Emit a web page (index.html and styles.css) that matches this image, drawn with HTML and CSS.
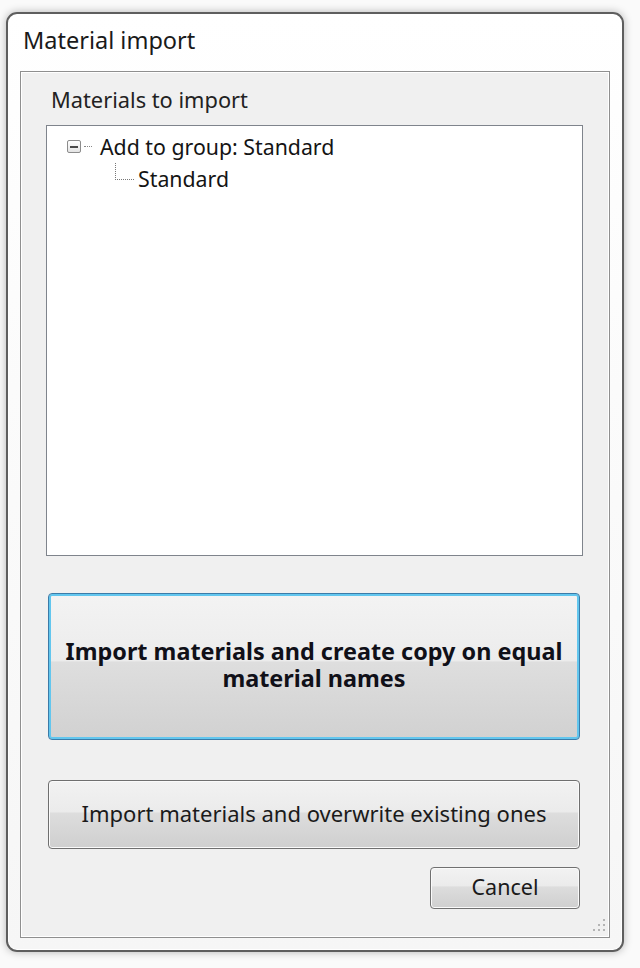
FILE: index.html
```html
<!DOCTYPE html>
<html>
<head>
<meta charset="utf-8">
<link rel="stylesheet" href="styles.css">
</head>
<body>
<div class="window">
  <div class="title">Material import</div>
  <div class="panel">
    <div class="label">Materials to import</div>
    <div class="tree">
      <div class="node root">
        <span class="expander"><span class="minus"></span></span>
        <span class="hdots"></span>
        <span class="text">Add to group: Standard</span>
      </div>
      <div class="node child">
        <span class="elbow"></span>
        <span class="text">Standard</span>
      </div>
    </div>
    <button class="btn primary"><span class="lines"><span class="line">Import materials and create copy on equal</span><span class="line">material names</span></span></button>
    <button class="btn secondary"><span>Import materials and overwrite existing ones</span></button>
    <div class="footer">
      <button class="btn cancel"><span>Cancel</span></button>
    </div>
    <div class="grip">
      <svg width="14" height="16" viewBox="0 0 14 16">
        <g fill="#b4b4b4">
          <rect x="11" y="1" width="2" height="2"/>
          <rect x="11" y="6" width="2" height="2"/>
          <rect x="6" y="6" width="2" height="2"/>
          <rect x="11" y="11" width="2" height="2"/>
          <rect x="6" y="11" width="2" height="2"/>
          <rect x="1" y="11" width="2" height="2"/>
        </g>
      </svg>
    </div>
  </div>
</div>
</body>
</html>
```
FILE: styles.css
```css
html, body {
  margin: 0;
  padding: 0;
}
body {
  width: 640px;
  height: 968px;
  background: #fafafa;
  font-family: "Noto Sans", "Open Sans", sans-serif;
  color: #1e1e1e;
  overflow: hidden;
}
.window {
  box-sizing: border-box;
  margin: 12px 0 0 6px;
  width: 618px;
  height: 940px;
  border: 2px solid #5e5e5e;
  border-radius: 11px;
  background: linear-gradient(180deg, #ffffff 0%, #fbfbfb 40%, #f6f6f6 100%);
  box-shadow: 0 0 9px rgba(0, 0, 0, 0.28), inset 0 0 0 1px #ffffff;
  padding: 0 12px 0 12px;
  display: flex;
  flex-direction: column;
}
.title {
  height: 57px;
  padding: 12px 0 0 3px;
  box-sizing: border-box;
  font-size: 23.5px;
  line-height: 28px;
  color: #1a1a1a;
}
.panel {
  position: relative;
  box-sizing: border-box;
  width: 590px;
  height: 867px;
  border: 1px solid #8f8f8f;
  box-shadow: inset 0 0 0 1px #ffffff;
  background: #f0f0f0;
  padding: 0 0 0 25px;
}
.label {
  font-size: 21.8px;
  line-height: 28px;
  padding: 14px 0 0 5px;
  height: 53px;
  box-sizing: border-box;
  color: #222;
}
.tree {
  box-sizing: border-box;
  width: 537px;
  height: 431px;
  background: #ffffff;
  border: 1px solid #7f848c;
  padding: 4px 0 0 20px;
  font-size: 21.3px;
  color: #141414;
}
.node {
  display: flex;
  align-items: center;
  height: 33px;
}
.expander {
  box-sizing: border-box;
  width: 14px;
  height: 13px;
  border: 1px solid #8c8c8c;
  border-radius: 2px;
  background: linear-gradient(180deg, #ffffff, #e4e4e4);
  display: flex;
  align-items: center;
  justify-content: center;
}
.minus {
  width: 8px;
  height: 2px;
  background: #4a4a4a;
}
.hdots {
  width: 8px;
  margin: 0 8px 0 3px;
  border-top: 1px dotted #888;
}
.root .text {
  line-height: 28px;
}
.child {
  height: 32px;
  padding-left: 48px;
  margin-top: -1px;
}
.elbow {
  width: 18px;
  height: 16px;
  border-left: 1px dotted #777;
  border-bottom: 1px dotted #777;
  margin: -14px 4px 0 0;
}
.btn {
  box-sizing: border-box;
  display: flex;
  align-items: center;
  justify-content: center;
  font-family: inherit;
  color: #1a1a1a;
  width: 532px;
  margin-left: 2px;
  border-radius: 4px;
  padding: 0;
  text-align: center;
  background: linear-gradient(180deg, #f3f3f3 0%, #ececec 46%, #dedede 47%, #d1d1d1 100%);
}
.primary {
  margin-top: 37px;
  height: 147px;
  border: 1px solid #3b7ba8;
  box-shadow: inset 0 0 0 2px #62c6ee;
  font-weight: bold;
  font-size: 23.4px;
  color: #101018;
}
.lines {
  display: flex;
  flex-direction: column;
  align-items: center;
  padding-bottom: 3px;
}
.line {
  display: block;
  height: 27px;
  line-height: 27px;
}
.secondary {
  margin-top: 40px;
  height: 69px;
  border: 1px solid #6f6f6f;
  box-shadow: inset 0 0 0 1px #fafafa;
  font-size: 22px;
  line-height: 28px;
  background: linear-gradient(180deg, #f2f2f2 0%, #ebebeb 46%, #dddddd 48%, #cfcfcf 100%);
}
.secondary span {
  padding-bottom: 4px;
}
.footer {
  display: flex;
  justify-content: flex-end;
  width: 534px;
  margin-top: 18px;
}
.cancel {
  width: 150px;
  height: 42px;
  margin-left: 0;
  border: 1px solid #707070;
  box-shadow: inset 0 0 0 1px #fafafa;
  font-size: 21.5px;
  line-height: 28px;
  background: linear-gradient(180deg, #f2f2f2 0%, #ebebeb 45%, #dddddd 47%, #cfcfcf 100%);
}
.cancel span {
  padding-bottom: 3px;
}
.grip {
  position: absolute;
  right: 3px;
  bottom: 3px;
  width: 14px;
  height: 16px;
}
.grip svg {
  display: block;
}
```
